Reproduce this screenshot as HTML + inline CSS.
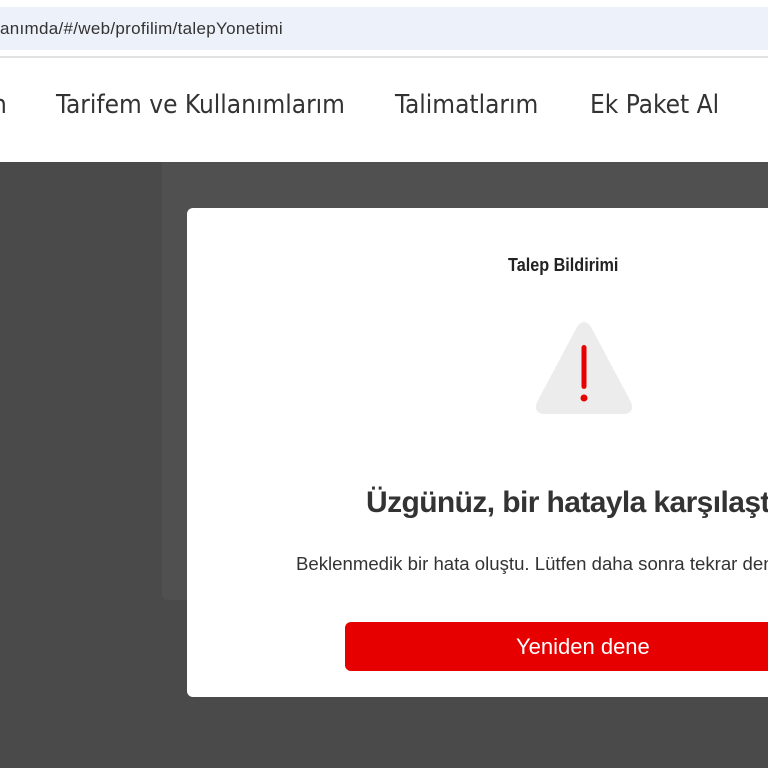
<!DOCTYPE html>
<html><head><meta charset="utf-8"><style>
*{margin:0;padding:0;box-sizing:border-box}
html,body{width:768px;height:768px;overflow:hidden}
body{background:#4a4a4a;font-family:"Liberation Sans",sans-serif}
.wrap{position:relative;width:768px;height:768px;overflow:hidden}
.top{position:absolute;left:0;top:0;width:768px;height:58px;background:#fff}
.addr{position:absolute;left:0;top:7px;width:768px;height:43px;background:#edf1f9;font-size:17px;color:#333;line-height:43px;letter-spacing:0.3px;white-space:nowrap}
.line{position:absolute;left:0;top:56px;width:768px;height:2px;background:#e2e2e2}
.nav{position:absolute;left:0;top:58px;width:768px;height:104px;background:#fff;font-size:26px;color:#333;font-family:"DejaVu Sans Condensed","Liberation Sans Narrow",sans-serif;font-weight:300;overflow:hidden}
.nav span{position:absolute;top:32px;white-space:nowrap}
.card{position:absolute;left:162px;top:162px;width:606px;height:438px;background:#505050;border-radius:0 0 0 6px}
.modal{position:absolute;left:187px;top:208px;width:581px;height:489px;background:#fff;border-radius:6px 0 0 6px;overflow:hidden}
.t{position:absolute;top:47px;left:321px;font-size:18px;color:#222;white-space:nowrap;font-weight:bold;transform:scaleX(0.9);transform-origin:left}
.h{position:absolute;top:278px;left:179px;font-size:30px;color:#333;white-space:nowrap;font-weight:bold;letter-spacing:-0.6px}
.p{position:absolute;top:345px;left:109px;font-size:18.6px;color:#333;white-space:nowrap}
.btn{position:absolute;left:158px;top:414px;width:450px;height:49px;background:#e60000;border-radius:6px;color:#fff;font-size:22px;line-height:49px;padding-left:171px;white-space:nowrap}
</style></head><body><div class="wrap">
<div class="top"></div>
<div class="addr">anımda/#/web/profilim/talepYonetimi</div>
<div class="line"></div>
<div class="nav"><span style="left:-8px">n</span><span style="left:56px">Tarifem ve Kullanımlarım</span><span style="left:395px">Talimatlarım</span><span style="left:590px">Ek Paket Al</span></div>
<div class="card"></div>
<div class="modal">
<div class="t">Talep Bildirimi</div>
<svg style="position:absolute;left:343px;top:110px" width="108" height="100" viewBox="0 0 108 100"><path d="M47 9 Q54 -1 61 9 L101 84 Q105 96 93 96 L15 96 Q3 96 7 84 Z" fill="#ececec"/><rect x="51.5" y="27" width="5" height="44" rx="2.5" fill="#e60000"/><circle cx="54" cy="80" r="3.5" fill="#e60000"/></svg>
<div class="h">Üzgünüz, bir hatayla karşılaştık</div>
<div class="p">Beklenmedik bir hata oluştu. Lütfen daha sonra tekrar deneyin.</div>
<div class="btn">Yeniden dene</div>
</div>
</div></body></html>
